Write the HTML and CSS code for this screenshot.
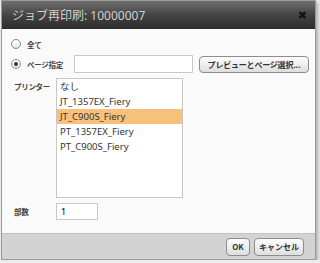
FILE: index.html
```html
<!DOCTYPE html>
<html lang="ja">
<head>
  <meta charset="UTF-8">
  <title>ジョブ再印刷</title>
  <link rel="stylesheet" href="styles.css">
</head>
<body>
  <div class="dialog">
    <div class="titleBar">
      <span class="title">ジョブ再印刷: 10000007</span>
      <span class="close">✖</span>
    </div>

    <div class="content">
      <div class="row radioRow">
        <span class="radio"></span>
        <span class="label">全て</span>
      </div>
      <div class="row radioRow pageRow">
        <span class="radio checked"></span>
        <span class="label pageLabel">ページ指定</span>
        <input type="text" class="pageInput">
        <button class="btn previewBtn">プレビューとページ選択...</button>
      </div>
      <div class="row printerRow">
        <span class="label fieldLabel">プリンター</span>
        <ul class="printerList">
          <li>なし</li>
          <li>JT_1357EX_Fiery</li>
          <li class="selected">JT_C900S_Fiery</li>
          <li>PT_1357EX_Fiery</li>
          <li>PT_C900S_Fiery</li>
        </ul>
      </div>
      <div class="row copiesRow">
        <span class="label fieldLabel">部数</span>
        <input type="text" class="copiesInput" value="1">
      </div>
    </div>

    <div class="footer">
      <button class="btn okBtn">OK</button>
      <button class="btn">キャンセル</button>
    </div>
  </div>
</body>
</html>
```

FILE: styles.css
```css
* { box-sizing: border-box; }
body {
  margin: 0;
  padding: 0;
  background: #ececec;
  font-family: "Noto Sans", "Noto Sans CJK JP", sans-serif;
  color: #333;
}
.dialog {
  width: 315px;
  height: 260px;
  margin-left: 1px;
  border: 1px solid #9a9a9a;
  background: #fafafa;
  display: flex;
  flex-direction: column;
  box-shadow: 2px 2px 3px rgba(0, 0, 0, 0.25);
}
.titleBar {
  height: 28px;
  background: linear-gradient(#6e6e6e, #444 50%, #2c2c2c);
  display: flex;
  align-items: center;
  justify-content: space-between;
  padding: 0 8px 0 10px;
  flex-shrink: 0;
}
.title {
  color: #d0d0d0;
  font-size: 12px;
  font-family: "Noto Sans", "Noto Sans CJK JP", sans-serif;
}
.close {
  color: #111;
  font-size: 11px;
  font-family: "DejaVu Sans", sans-serif;
}
.content {
  flex: 1;
  padding: 7px 0 0 9px;
}
.row {
  display: flex;
  align-items: center;
  white-space: nowrap;
}
.radioRow {
  height: 16px;
}
.pageRow {
  height: 18px;
  margin-top: 3px;
}
.radio {
  width: 10px;
  height: 10px;
  border-radius: 50%;
  border: 1px solid #8a8a8a;
  background: linear-gradient(#fff, #e6e6e6);
  margin-right: 6px;
  display: flex;
  align-items: center;
  justify-content: center;
}
.radio.checked::after {
  content: "";
  width: 4px;
  height: 4px;
  border-radius: 50%;
  background: #333;
}
.label {
  font-size: 7.5px;
  font-weight: bold;
  color: #444;
  font-family: "Noto Sans CJK JP", sans-serif;
  white-space: nowrap;
  letter-spacing: -0.3px;
}
.pageLabel {
  width: 47px;
}
.pageInput {
  width: 119px;
  height: 18px;
  border: 1px solid #c8c8c8;
  background: #fff;
  margin: 0;
}
.btn {
  height: 17px;
  padding: 0 4px;
  border: 1px solid #8c8c8c;
  border-radius: 4px;
  background: linear-gradient(#fdfdfd, #dedede);
  font-family: "Noto Sans CJK JP", sans-serif;
  font-size: 8px;
  font-weight: bold;
  color: #333;
  line-height: 15px;
  white-space: nowrap;
}
.previewBtn {
  margin-left: 6px;
  width: 110px;
  letter-spacing: -0.2px;
}
.fieldLabel {
  width: 45px;
  padding-left: 3px;
  align-self: flex-start;
}
.printerRow {
  margin-top: 5px;
  align-items: flex-start;
}
.printerRow .fieldLabel {
  margin-top: 3px;
}
.printerList {
  list-style: none;
  margin: 0;
  padding: 0;
  width: 127px;
  height: 120px;
  border: 1px solid #c8c8c8;
  background: #fff;
}
.printerList li {
  height: 15px;
  line-height: 15px;
  padding-left: 3px;
  font-size: 9.5px;
  color: #333;
}
.printerList li.selected {
  background: #f8c17b;
}
.copiesRow {
  margin-top: 5px;
}
.copiesRow .fieldLabel {
  align-self: center;
}
.copiesInput {
  width: 42px;
  height: 17px;
  margin: 0;
  border: 1px solid #c8c8c8;
  background: #fff;
  font-size: 9px;
  padding-left: 4px;
  font-family: "Noto Sans", sans-serif;
}
.footer {
  height: 26px;
  flex-shrink: 0;
  background: #d3d3d3;
  border-top: 1px solid #c2c2c2;
  display: flex;
  justify-content: flex-end;
  align-items: center;
  gap: 4px;
  padding-right: 11px;
}
.footer .btn {
  height: 18px;
}
.okBtn {
  width: 24px;
  padding: 0;
}
```
